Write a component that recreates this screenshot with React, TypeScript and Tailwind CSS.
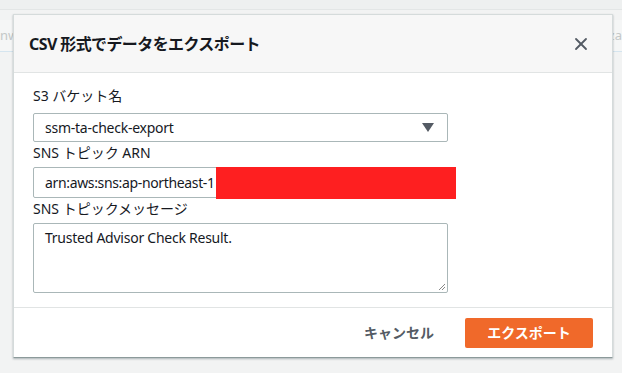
import { X } from "lucide-react";

const font = { fontFamily: '"Noto Sans", "Noto Sans CJK JP", sans-serif' };

export default function App() {
  return (
    <div
      className="relative w-[622px] h-[373px] overflow-hidden bg-[#f2f3f3]"
      style={font}
    >
      {/* background page behind the modal */}
      <div className="h-[10px] bg-[#eef0f0] border-b border-[#e3e6e6]" />
      <div className="mt-[10px] h-[32px] bg-[#f5f6f6] border-b border-[#d5e5ef] flex items-center justify-between text-[13px] text-[#c4c8c8]">
        <span>nw</span>
        <span>za</span>
      </div>

      {/* modal */}
      <div className="absolute left-[13px] top-[14px] w-[600px] h-[344px] bg-white border border-[#d5dbdb] border-b-[#8c9a9a] shadow-[0_1px_2px_rgba(0,28,36,0.3)] flex flex-col">
        <div className="h-[58px] bg-[#f7f7f7] border-b border-[#e1e4e4] flex items-center justify-between pl-[15px] pr-[21px]">
          <h2 className="text-[16px] font-bold text-[#16191f] tracking-[-0.6px]">
            CSV 形式でデータをエクスポート
          </h2>
          <X size={20} strokeWidth={2.2} className="text-[#545b64]" />
        </div>

        <div className="flex-1 px-[19px] pt-[13px] flex flex-col text-[14px] text-[#16191f]">
          <label className="leading-[20px]">S3 バケット名</label>
          <div className="mt-[7px] w-[415px] h-[29px] border border-[#aab7b8] rounded-[2px] flex items-center justify-between pl-[11px] pr-[13px]">
            <span className="tracking-[-0.25px]">ssm-ta-check-export</span>
            <svg width="12" height="9" viewBox="0 0 12 9">
              <path d="M0 0 H12 L6 9 Z" fill="#545b64" />
            </svg>
          </div>

          <label className="mt-[1px] leading-[20px]">SNS トピック ARN</label>
          <div className="relative mt-[4px] w-[415px] h-[31px] border border-[#aab7b8] rounded-[2px] flex items-center pl-[11px]">
            <span className="tracking-[-0.35px]">arn:aws:sns:ap-northeast-1</span>
            <div className="absolute left-[182px] top-[-1px] w-[240px] h-[32px] bg-[#fe1f20]" />
          </div>

          <label className="mt-[1px] leading-[20px]">SNS トピックメッセージ</label>
          <div className="relative mt-[4px] w-[415px] h-[70px] border border-[#aab7b8] rounded-[2px] pl-[11px] pt-[3px]">
            <span className="tracking-[-0.25px]">Trusted Advisor Check Result.</span>
            <svg className="absolute right-[1px] bottom-[1px]" width="8" height="8" viewBox="0 0 8 8">
              <path d="M1 7 L7 1 M4 7 L7 4" stroke="#888" strokeWidth="1" />
            </svg>
          </div>
        </div>

        <div className="h-[50px] border-t border-[#e1e4e4] flex items-center justify-end pr-[19px] gap-[31px]">
          <button className="text-[14px] font-bold text-[#545b64]">キャンセル</button>
          <button className="w-[128px] h-[30px] bg-[#f0692a] rounded-[2px] text-[14px] font-bold text-white">
            エクスポート
          </button>
        </div>
      </div>
    </div>
  );
}
